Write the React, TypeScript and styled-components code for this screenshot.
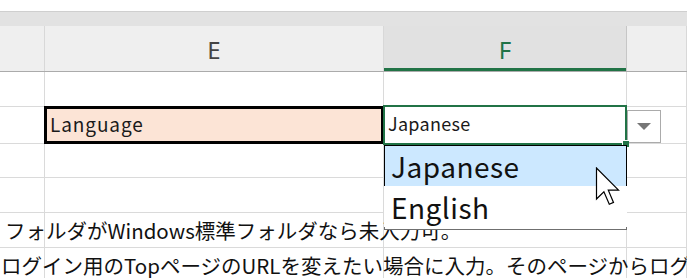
import styled, { createGlobalStyle } from 'styled-components';

const GlobalStyle = createGlobalStyle`
    html, body {
        margin: 0;
        background: #ffffff;
        overflow: hidden;
    }
`;

const COLS = '45px 339px 243px 60px';
const FONT = `"Noto Sans CJK JP", "Noto Sans", sans-serif`;

export default function App(): JSX.Element {
    return (
        <>
            <GlobalStyle />
            <Sheet>
                <TopGap />
                <Band />
                <HeaderRow>
                    <HeaderCell />
                    <HeaderCell>E</HeaderCell>
                    <HeaderCell $selected>F</HeaderCell>
                    <HeaderCell />
                </HeaderRow>

                <Row $height={35}>
                    <Cell />
                    <Cell />
                    <Cell />
                    <Cell />
                </Row>

                <Row $height={37}>
                    <Cell />
                    <LabelCell>Language</LabelCell>
                    <ActiveCell>
                        Japanese
                        <FillHandle />
                        <DropButton>
                            <svg width="14" height="8" viewBox="0 0 14 8">
                                <path d="M0 0 L14 0 L7 7 Z" fill="#767676" />
                            </svg>
                        </DropButton>
                        <DropList>
                            <Option $active>Japanese</Option>
                            <Option>English</Option>
                            <Cursor width="27" height="40" viewBox="0 0 13 20">
                                <path
                                    d="M0.5 0.5 L0.5 16 L4.2 12.4 L6.9 18.6 L9 17.7 L6.4 11.6 L11.5 11.6 Z"
                                    fill="#ffffff"
                                    stroke="#000000"
                                    strokeWidth="0.6"
                                    strokeLinejoin="miter"
                                />
                            </Cursor>
                        </DropList>
                    </ActiveCell>
                    <Cell />
                </Row>

                <Row $height={34}>
                    <Cell />
                    <Cell />
                    <Cell />
                    <Cell />
                </Row>

                <Row $height={35}>
                    <Cell />
                    <Cell />
                    <Cell />
                    <Cell />
                </Row>

                <Row $height={35}>
                    <TextCell>フォルダがWindows標準フォルダなら未入力可。</TextCell>
                    <Cell />
                    <Cell />
                    <Cell />
                </Row>

                <Row $height={35}>
                    <TextCell $shift={-4}>
                        ログイン用のTopページのURLを変えたい場合に入力。そのページからログインします。
                    </TextCell>
                    <Cell />
                    <Cell />
                    <Cell />
                </Row>
            </Sheet>
        </>
    );
}

const Sheet = styled.div`
    width: 687px;
    height: 278px;
    overflow: hidden;
    font-family: ${FONT};
    background: #ffffff;
`;

const TopGap = styled.div`
    height: 11px;
    background: #ffffff;
    border-bottom: 1px solid #cfcfcf;
`;

const Band = styled.div`
    height: 14px;
    background: #e2e2e2;
`;

const HeaderRow = styled.div`
    display: grid;
    grid-template-columns: ${COLS};
    height: 46px;
    background: #efefef;
    border-bottom: 1px solid #ababab;
    box-sizing: border-box;
`;

const HeaderCell = styled.div<{ $selected?: boolean }>`
    display: flex;
    align-items: center;
    justify-content: center;
    border-right: 1px solid ${(p) => (p.$selected ? '#c6c6c6' : '#d8d8d8')};
    background: ${(p) => (p.$selected ? '#e1e1e1' : 'transparent')};
    color: ${(p) => (p.$selected ? '#217346' : '#444444')};
    box-shadow: ${(p) => (p.$selected ? 'inset 0 -3px 0 #217346' : 'none')};
    font-family: "Noto Sans", sans-serif;
    font-size: 24px;
    padding-top: 1px;
    box-sizing: border-box;
`;

const Row = styled.div<{ $height: number }>`
    display: grid;
    grid-template-columns: ${COLS};
    height: ${(p) => p.$height}px;
`;

const Cell = styled.div`
    position: relative;
    border-right: 1px solid #dadada;
    border-bottom: 1px solid #dadada;
    box-sizing: border-box;
`;

const LabelCell = styled(Cell)`
    display: flex;
    align-items: flex-end;
    padding: 0 0 6px 5px;
    background: #fce4d6;
    color: #1a1a1a;
    font-size: 19px;
    letter-spacing: 0.9px;

    &::after {
        content: '';
        position: absolute;
        inset: -1px -1px -1px -1px;
        border: 3px solid #000000;
    }
`;

const ActiveCell = styled(Cell)`
    display: flex;
    align-items: flex-end;
    padding: 0 0 7px 4px;
    color: #1a1a1a;
    font-size: 18px;
    letter-spacing: 0.3px;
    z-index: 2;

    &::after {
        content: '';
        position: absolute;
        inset: -2px -1px -2px -1px;
        border: 2px solid #217346;
        pointer-events: none;
    }
`;

const FillHandle = styled.span`
    position: absolute;
    right: -3px;
    bottom: -4px;
    width: 6px;
    height: 6px;
    background: #217346;
    border-left: 1px solid #ffffff;
    border-top: 1px solid #ffffff;
    z-index: 3;
`;

const DropButton = styled.div`
    position: absolute;
    left: 243px;
    top: 3px;
    width: 34px;
    height: 33px;
    display: flex;
    align-items: center;
    justify-content: center;
    background: #ffffff;
    border: 1px solid #ababab;
    box-sizing: border-box;
`;

const DropList = styled.div`
    position: absolute;
    left: 0;
    top: 38px;
    width: 243px;
    height: 85px;
    background: #ffffff;
    border: 1px solid #6f6f6f;
    box-sizing: border-box;
    z-index: 4;
`;

const Option = styled.div<{ $active?: boolean }>`
    height: ${(p) => (p.$active ? 42 : 41)}px;
    display: flex;
    align-items: center;
    padding-left: 6px;
    background: ${(p) => (p.$active ? '#cce8ff' : '#ffffff')};
    border: 1px solid ${(p) => (p.$active ? '#000000' : 'transparent')};
    margin: -1px -1px 0 -1px;
    color: #111111;
    font-size: 28px;
    letter-spacing: 0.5px;
    box-sizing: border-box;
`;

const Cursor = styled.svg`
    position: absolute;
    left: 210px;
    top: 21px;
`;

const TextCell = styled(Cell)<{ $shift?: number }>`
    display: flex;
    align-items: center;
    white-space: nowrap;
    overflow: visible;
    padding-left: ${(p) => 5 + (p.$shift ?? 0)}px;
    color: #111111;
    font-size: 20.5px;
    z-index: 1;
`;
